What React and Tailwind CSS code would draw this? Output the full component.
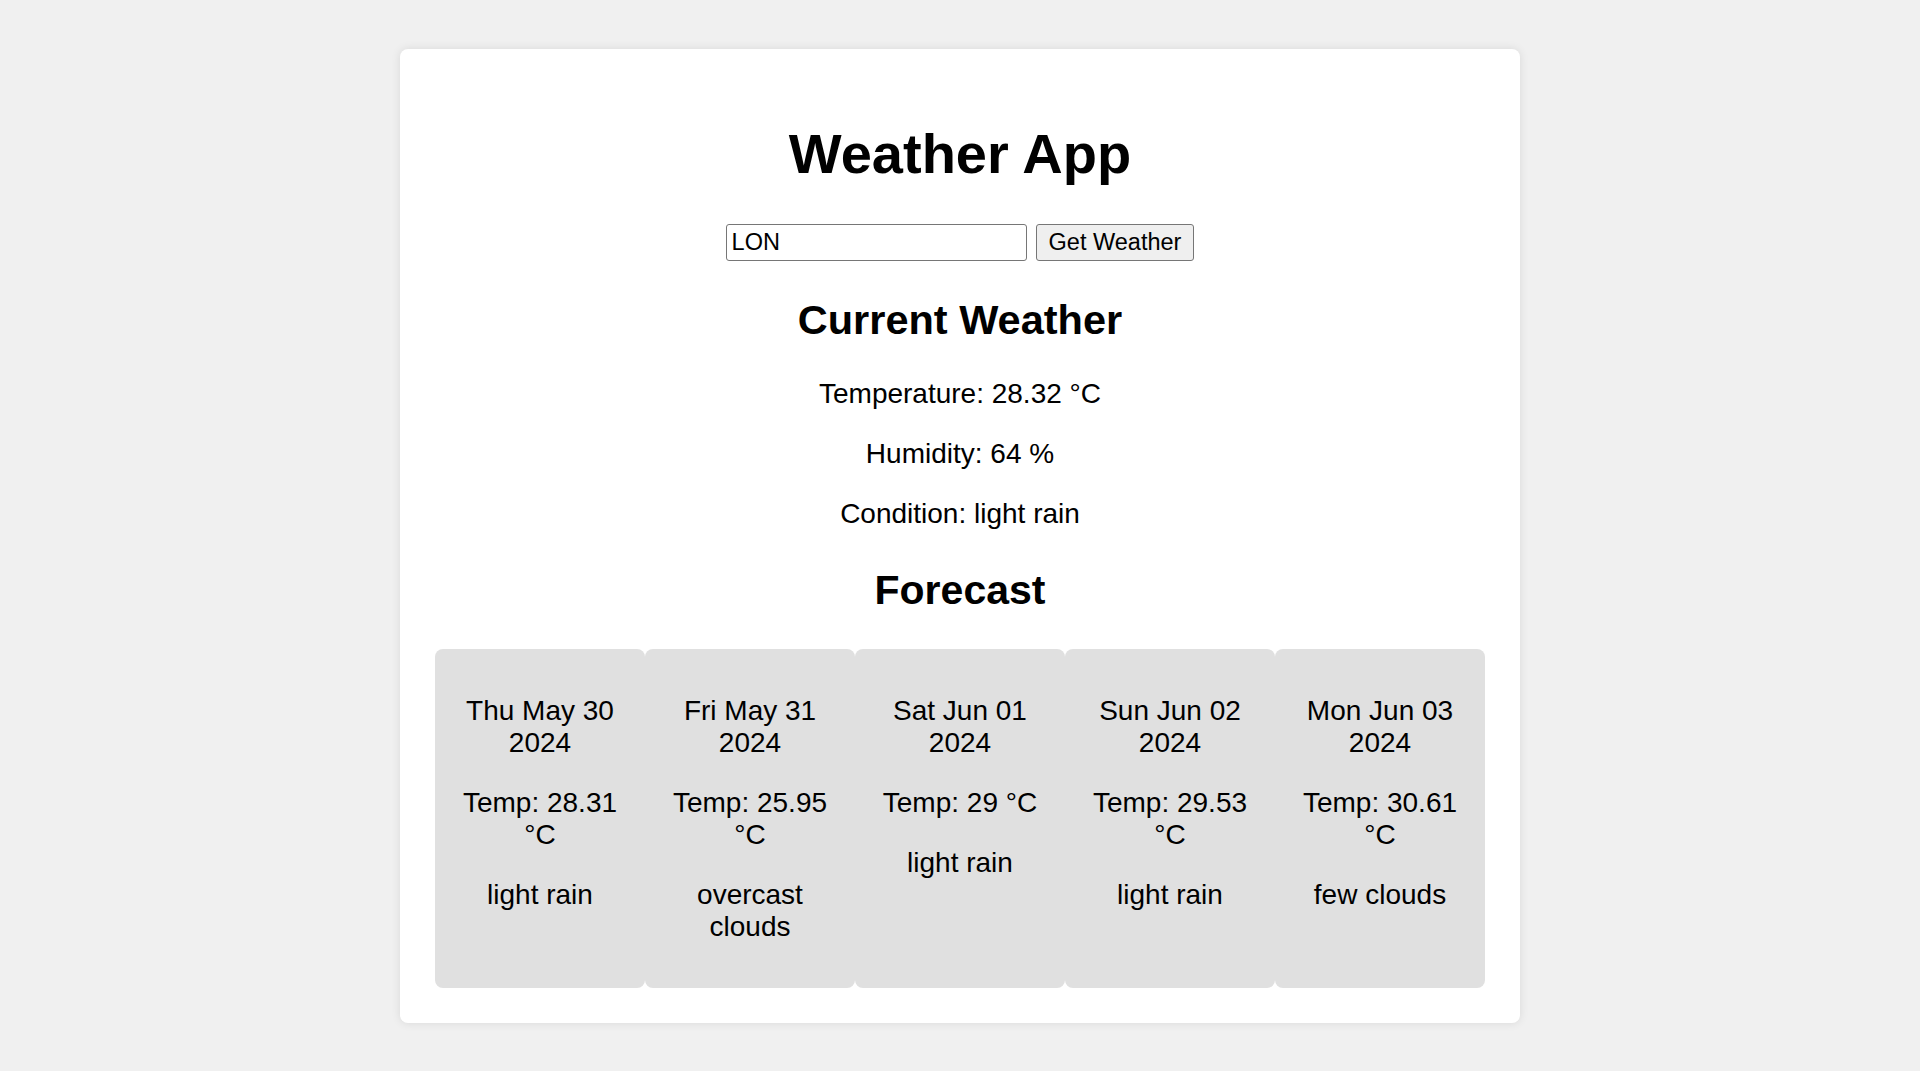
import React, { useState } from "react";

const forecast = [
  { date: "Thu May 30 2024", temp: "28.31", desc: "light rain" },
  { date: "Fri May 31 2024", temp: "25.95", desc: "overcast clouds" },
  { date: "Sat Jun 01 2024", temp: "29", desc: "light rain" },
  { date: "Sun Jun 02 2024", temp: "29.53", desc: "light rain" },
  { date: "Mon Jun 03 2024", temp: "30.61", desc: "few clouds" },
];

const App = () => {
  const [city, setCity] = useState("LON");

  return (
    <div className="min-h-screen bg-[#f0f0f0] pt-[49px] pb-[49px] font-['Liberation_Sans',Arial,sans-serif] text-black">
      <div className="mx-auto flex w-[1120px] flex-col items-center rounded-lg bg-white px-[35px] pt-[73px] pb-[35px] shadow-[0_0_10px_rgba(0,0,0,0.1)]">
        <h1 className="text-[56px] font-bold leading-[64px]">Weather App</h1>

        <div className="mt-[38px] flex items-center gap-[9px]">
          <input
            type="text"
            value={city}
            onChange={(e) => setCity(e.target.value)}
            className="h-[37px] w-[301px] rounded-[3px] border border-[#767676] bg-white px-[5px] text-[23.5px] text-black outline-none"
          />
          <button className="h-[37px] rounded-[3px] border border-[#767676] bg-[#efefef] px-[12px] text-[23.5px] text-black">
            Get Weather
          </button>
        </div>

        <h2 className="mt-[35px] text-[41.5px] font-bold leading-[48px]">
          Current Weather
        </h2>
        <div className="mt-[34px] flex flex-col items-center gap-[28px] text-[28px] leading-[32px]">
          <p>Temperature: 28.32 °C</p>
          <p>Humidity: 64 %</p>
          <p>Condition: light rain</p>
        </div>

        <h2 className="mt-[36px] text-[41px] font-bold leading-[48px]">
          Forecast
        </h2>
        <div className="mt-[35px] flex w-full">
          {forecast.map((day) => (
            <div
              key={day.date}
              className="flex min-h-[339px] flex-1 flex-col items-center gap-[28px] rounded-lg bg-[#e0e0e0] px-[20px] pt-[46px] pb-[45px] text-center text-[28px] leading-[32px]"
            >
              <p>{day.date}</p>
              <p>Temp: {day.temp} °C</p>
              <p>{day.desc}</p>
            </div>
          ))}
        </div>
      </div>
    </div>
  );
};

export default App;
